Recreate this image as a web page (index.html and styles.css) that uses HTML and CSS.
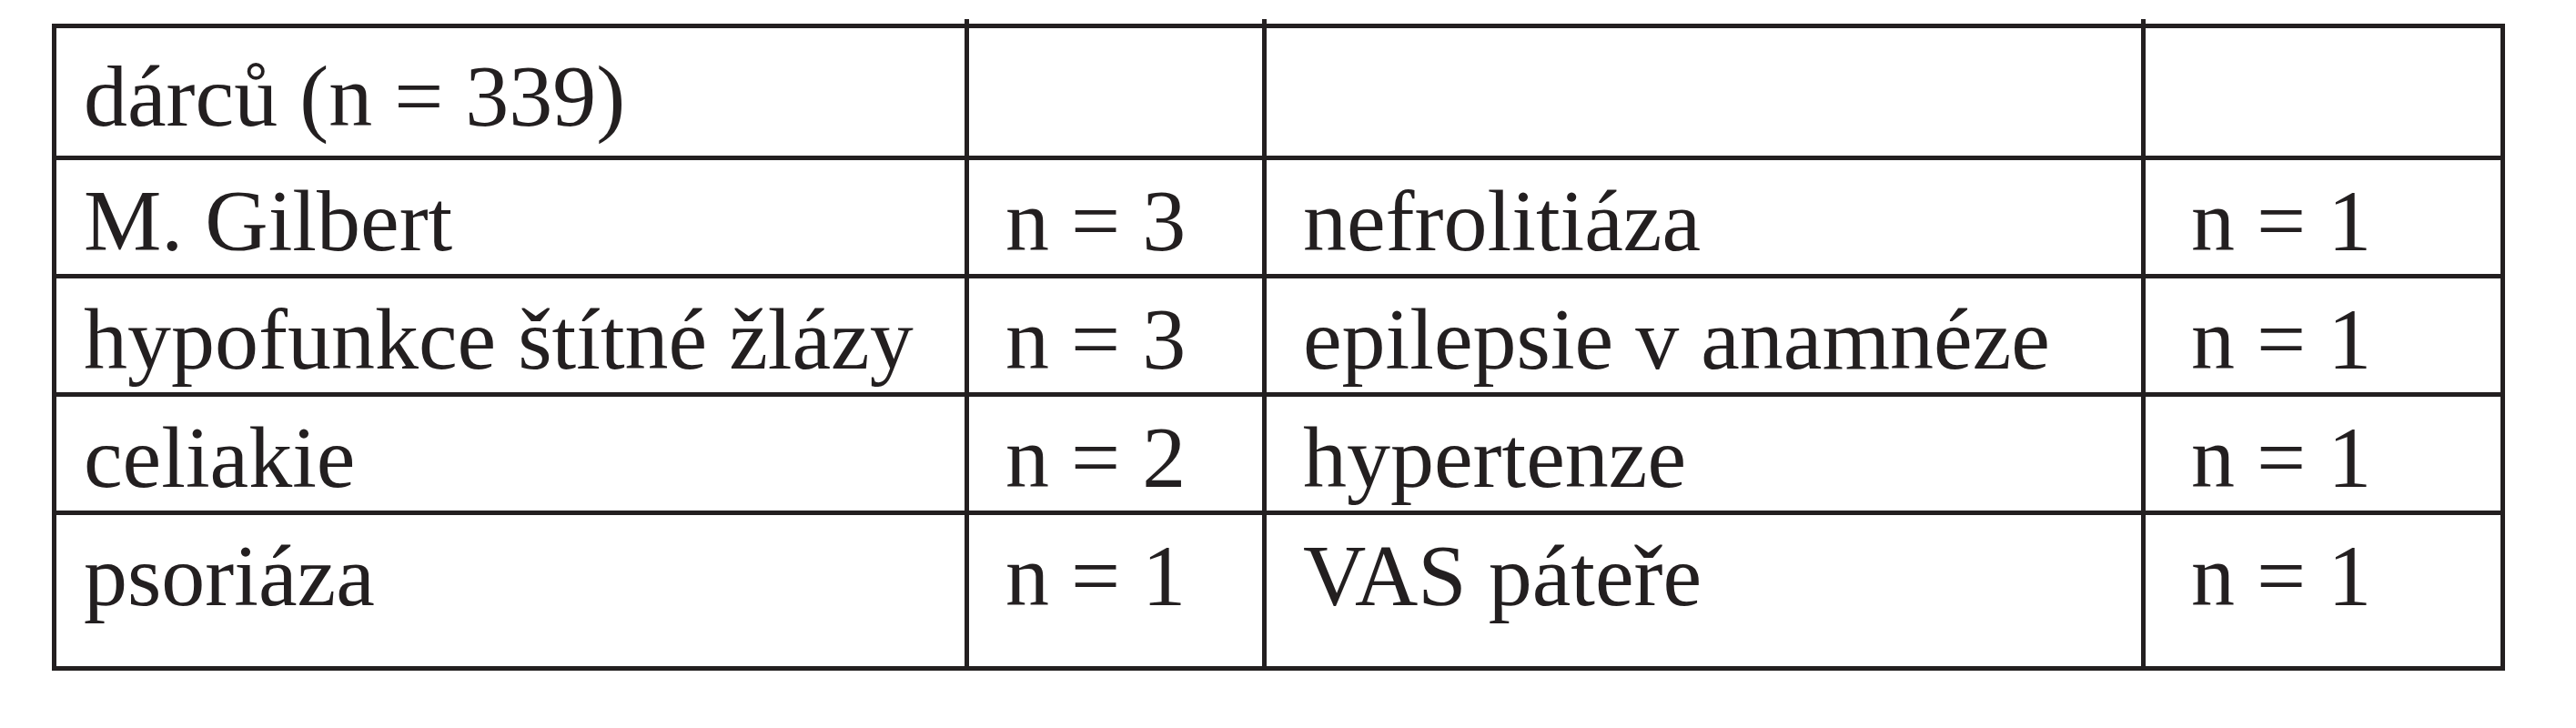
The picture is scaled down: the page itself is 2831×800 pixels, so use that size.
FILE: index.html
```html
<!DOCTYPE html>
<html lang="cs">
<head>
<meta charset="utf-8">
<title>Tabulka</title>
<link rel="stylesheet" href="styles.css">
</head>
<body>
<div class="sheet">
  <div class="grid">
    <div class="cell c1 head">dárců (n = 339)</div>
    <div class="cell c2 head tick"></div>
    <div class="cell c3 head tick"></div>
    <div class="cell c4 head tick"></div>

    <div class="cell c1">M. Gilbert</div>
    <div class="cell c2">n = 3</div>
    <div class="cell c3">nefrolitiáza</div>
    <div class="cell c4">n = 1</div>

    <div class="cell c1">hypofunkce štítné žlázy</div>
    <div class="cell c2">n = 3</div>
    <div class="cell c3">epilepsie v anamnéze</div>
    <div class="cell c4">n = 1</div>

    <div class="cell c1">celiakie</div>
    <div class="cell c2">n = 2</div>
    <div class="cell c3">hypertenze</div>
    <div class="cell c4">n = 1</div>

    <div class="cell c1">psoriáza</div>
    <div class="cell c2">n = 1</div>
    <div class="cell c3">VAS páteře</div>
    <div class="cell c4">n = 1</div>
  </div>
</div>
</body>
</html>
```

FILE: styles.css
```css
html, body {
  margin: 0;
  padding: 0;
  background: #ffffff;
}

.sheet {
  padding: 26px 0 0 57px;
}

.grid {
  display: grid;
  grid-template-columns: 998px 322px 961px 390px;
  grid-template-rows: 140px 125px 125px 125px 166px;
  gap: 5px;
  padding: 5px;
  width: max-content;
  background: #231f20;
  font-family: "Liberation Serif", "Times New Roman", serif;
  font-size: 96px;
  line-height: 100px;
  color: #231f20;
}

.cell {
  position: relative;
  background: #ffffff;
  padding-top: 17px;
  white-space: nowrap;
}

.cell.head {
  padding-top: 25px;
}

.c1 { padding-left: 30px; }
.c2 { padding-left: 40px; }
.c3 { padding-left: 40px; }
.c4 { padding-left: 50px; }

.tick::before {
  content: "";
  position: absolute;
  left: -5px;
  top: -10px;
  width: 5px;
  height: 5px;
  background: #231f20;
}
```
